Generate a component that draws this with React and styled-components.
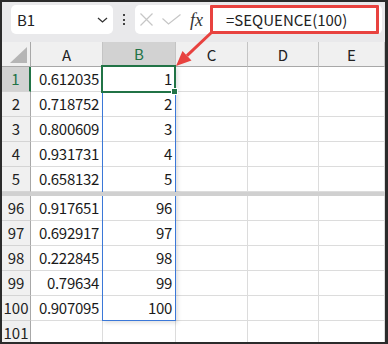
import styled, { createGlobalStyle } from 'styled-components';

const GREEN = '#217346';
const BLUE = '#3b78d8';
const RED = '#e8423f';

const topRows = [
  ['1', '0.612035', '1'],
  ['2', '0.718752', '2'],
  ['3', '0.800609', '3'],
  ['4', '0.931731', '4'],
  ['5', '0.658132', '5'],
];

const bottomRows = [
  ['96', '0.917651', '96'],
  ['97', '0.692917', '97'],
  ['98', '0.222845', '98'],
  ['99', '0.79634', '99'],
  ['100', '0.907095', '100'],
  ['101', '', ''],
];

const Global = createGlobalStyle`
  body { margin: 0; background: #fff; }
  * { box-sizing: border-box; }
`;

const Frame = styled.div`
  width: 388px;
  height: 344px;
  padding: 2px 3px 2px 2px;
  background: #2b2b2b;
  font-family: "Noto Sans CJK JP", "Liberation Sans", sans-serif;
`;

const Window = styled.div`
  position: relative;
  height: 100%;
  overflow: hidden;
  background: #e9e9eb;
  display: flex;
  flex-direction: column;
`;

const Toolbar = styled.div`
  height: 40px;
  flex: none;
  display: flex;
  align-items: flex-start;
  padding: 3px 3px 0 9px;
`;

const NameBox = styled.div`
  width: 102px;
  height: 29px;
  background: #fff;
  border-radius: 5px;
  display: flex;
  align-items: center;
  justify-content: space-between;
  padding: 0 5px 0 6px;
  font-size: 15px;
  color: #222;
`;

const Grip = styled.div`
  width: 22px;
  height: 29px;
  display: flex;
  flex-direction: column;
  align-items: center;
  justify-content: center;
  gap: 2.5px;
`;

const Dot = styled.span`
  width: 2px;
  height: 2px;
  background: #444;
`;

const FormulaBar = styled.div`
  width: 247px;
  height: 29px;
  background: #fff;
  border-radius: 5px;
  display: flex;
  align-items: center;
  padding: 0 3px 0 5px;
`;

const IconSlot = styled.div`
  display: flex;
  align-items: center;
  margin-right: ${p => p.$gap}px;
`;

const Fx = styled.span`
  font-family: "Liberation Serif", serif;
  font-style: italic;
  font-size: 18px;
  color: #333;
  margin-right: 7px;
  line-height: 1;
`;

const FormulaInput = styled.div`
  flex: 1;
  height: 29px;
  border: 3px solid ${RED};
  border-radius: 1px;
  padding-left: 13px;
  font-size: 15px;
  line-height: 23px;
  color: #222;
`;

const Sheet = styled.div`
  flex: 1;
  background: #fff;
  display: flex;
  flex-direction: column;
`;

const Row = styled.div`
  flex: none;
  height: 25px;
  display: grid;
  grid-template-columns: 29px 72px 73px 72px 71px 1fr;
`;

const Corner = styled.div`
  background: #f0f0f0;
  border-right: 1px solid #a8a8a8;
  border-bottom: 1px solid #a8a8a8;
  display: flex;
  align-items: flex-end;
  justify-content: flex-end;
  padding: 0 3px 3px 0;
`;

const ColHead = styled.div`
  background: ${p => (p.$sel ? '#d2d2d2' : '#f0f0f0')};
  color: ${p => (p.$sel ? GREEN : '#222')};
  border-right: 1px solid #c4c4c4;
  border-bottom: ${p => (p.$sel ? `2px solid ${GREEN}` : '1px solid #a8a8a8')};
  display: flex;
  align-items: center;
  justify-content: center;
  font-size: 15px;
`;

const RowHead = styled.div`
  background: ${p => (p.$sel ? '#d2d2d2' : '#f0f0f0')};
  color: ${p => (p.$sel ? GREEN : '#222')};
  border-right: ${p => (p.$sel ? `2px solid ${GREEN}` : '1px solid #a8a8a8')};
  border-bottom: 1px solid #d4d4d4;
  text-align: center;
  font-size: 15px;
  line-height: 24px;
`;

const Cell = styled.div`
  border-right: 1px solid #dcdcdc;
  border-bottom: 1px solid #dcdcdc;
  text-align: right;
  padding-right: 3px;
  font-size: 15px;
  line-height: 24px;
  letter-spacing: -0.3px;
  color: #1a1a1a;
`;

const SplitBand = styled.div`
  flex: none;
  height: 4px;
  background: #d0d0d0;
  position: relative;
  z-index: 2;
`;

const Spill = styled.div`
  position: absolute;
  left: 100px;
  top: 64px;
  width: 74px;
  height: 255px;
  border: 1px solid ${BLUE};
  box-shadow: 2px 2px 4px rgba(0, 0, 0, 0.12);
  pointer-events: none;
`;

const Selection = styled.div`
  position: absolute;
  left: 99px;
  top: 63px;
  width: 75px;
  height: 28px;
  border: 2px solid ${GREEN};
  z-index: 3;
`;

const Handle = styled.span`
  position: absolute;
  right: -3px;
  bottom: -3px;
  width: 5px;
  height: 5px;
  background: ${GREEN};
  outline: 1px solid #fff;
`;

const Annotation = styled.svg`
  position: absolute;
  left: 0;
  top: 0;
  z-index: 4;
  pointer-events: none;
`;

const DataRow = ({ row, sel }) => (
  <Row>
    <RowHead $sel={sel}>{row[0]}</RowHead>
    <Cell>{row[1]}</Cell>
    <Cell>{row[2]}</Cell>
    <Cell />
    <Cell />
    <Cell />
  </Row>
);

export default function App() {
  return (
    <Frame>
      <Global />
      <Window>
        <Toolbar>
          <NameBox>
            <span>B1</span>
            <svg width="11" height="6" viewBox="0 0 11 6">
              <path d="M1 1l4.5 4L10 1" fill="none" stroke="#333" strokeWidth="1.3" />
            </svg>
          </NameBox>
          <Grip>
            <Dot />
            <Dot />
            <Dot />
          </Grip>
          <FormulaBar>
            <IconSlot $gap={9}>
              <svg width="13" height="13" viewBox="0 0 13 13">
                <path d="M0.5 0.5l12 12M12.5 0.5l-12 12" stroke="#c6c6c6" strokeWidth="1.2" />
              </svg>
            </IconSlot>
            <IconSlot $gap={9}>
              <svg width="19" height="11" viewBox="0 0 19 11">
                <path d="M0.5 4.5l6 5.5L18.5 0.5" fill="none" stroke="#c6c6c6" strokeWidth="1.2" />
              </svg>
            </IconSlot>
            <Fx>fx</Fx>
            <FormulaInput>=SEQUENCE(100)</FormulaInput>
          </FormulaBar>
        </Toolbar>
        <Sheet>
          <Row>
            <Corner>
              <svg width="17" height="16" viewBox="0 0 17 16">
                <polygon points="17,0 17,16 0,16" fill="#b5b5b5" />
              </svg>
            </Corner>
            <ColHead>A</ColHead>
            <ColHead $sel>B</ColHead>
            <ColHead>C</ColHead>
            <ColHead>D</ColHead>
            <ColHead>E</ColHead>
          </Row>
          {topRows.map((r, i) => (
            <DataRow key={r[0]} row={r} sel={i === 0} />
          ))}
          <SplitBand />
          {bottomRows.map(r => (
            <DataRow key={r[0]} row={r} />
          ))}
        </Sheet>
        <Spill />
        <Selection>
          <Handle />
        </Selection>
        <Annotation width="383" height="340" viewBox="2 2 383 340">
          <line x1="212" y1="32" x2="187" y2="55.7" stroke={RED} strokeWidth="3" />
          <polygon points="176,66 191.5,60.5 182.5,51" fill={RED} />
        </Annotation>
      </Window>
    </Frame>
  );
}
